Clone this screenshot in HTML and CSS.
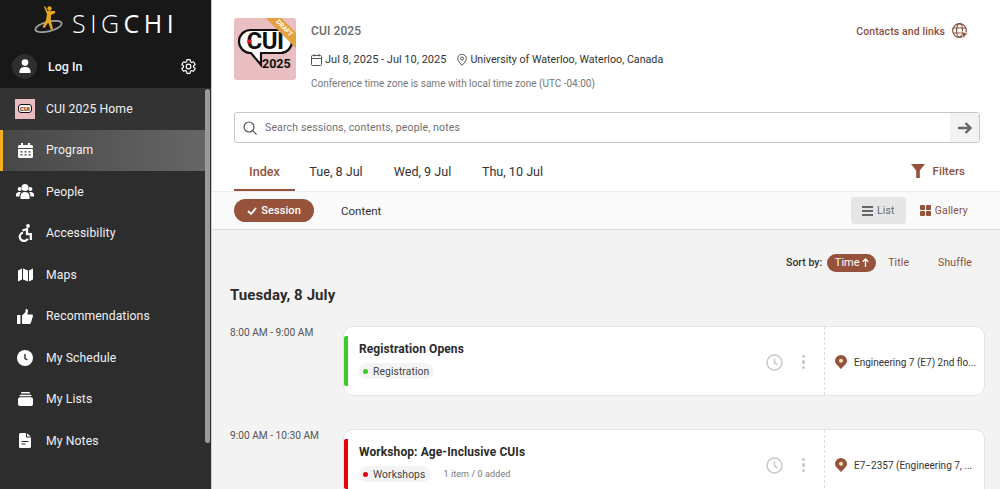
FILE: index.html
```html
<!DOCTYPE html>
<html lang="en">
<head>
<meta charset="utf-8">
<title>CUI 2025 Program</title>
<link rel="stylesheet" href="styles.css">
</head>
<body>
<div class="app">
  <aside class="sidebar">
    <div class="side-top">
      <div class="logo">
        <svg class="logo-mark" width="30" height="30" viewBox="0 0 30 30">
          <ellipse cx="14.500" cy="21.500" rx="13.500" ry="4.800" transform="rotate(-14 14.500 21.500)" fill="none" stroke="#a0a0a0" stroke-width="1.700"/>
          <circle cx="15.500" cy="3.500" r="2.200" fill="#e5a823"/>
          <path d="M11 1l2.500 5h3.500L21 6l.3 2-4.300 2-.2 5 2.200 9-2 1-2.800-7.500L10.500 23l-2-1 3.500-7 1-6-3-7z" fill="#e5a823"/>
        </svg>
        <span class="logo-text"><span class="thin">SIG</span><span class="bold">CHI</span></span>
      </div>
      <div class="login">
        <span class="avatar"><svg width="14" height="14" viewBox="0 0 14 14"><circle cx="7" cy="3.600" r="3.300" fill="#fff"/><path d="M1.500 14v-1.800C1.500 9.500 3.800 8 7 8s5.500 1.500 5.500 4.200V14z" fill="#fff"/></svg></span>
        <span class="login-text">Log In</span>
        <svg class="gear" width="17" height="17" viewBox="0 0 24 24" fill="none" stroke="#fff" stroke-width="1.700"><path d="M19.140 12.940c.04-.3.06-.61.06-.94 0-.32-.02-.64-.07-.94l2.030-1.580c.18-.14.23-.41.12-.61l-1.920-3.320c-.12-.22-.37-.29-.59-.22l-2.390.96c-.5-.38-1.030-.7-1.620-.94l-.36-2.540c-.04-.24-.24-.41-.48-.41h-3.840c-.24 0-.43.17-.47.41l-.36 2.540c-.59.24-1.130.57-1.620.94l-2.390-.96c-.22-.08-.47 0-.59.22L2.740 8.870c-.12.21-.08.47.12.61l2.030 1.580c-.05.3-.09.63-.09.94s.02.64.07.94l-2.030 1.580c-.18.14-.23.41-.12.61l1.920 3.320c.12.22.37.29.59.22l2.390-.96c.5.38 1.030.7 1.620.94l.36 2.540c.05.24.24.41.48.41h3.840c.24 0 .44-.17.47-.41l.36-2.540c.59-.24 1.130-.56 1.620-.94l2.390.96c.22.08.47 0 .59-.22l1.920-3.320c.12-.22.07-.47-.12-.61l-2.010-1.580z"/><circle cx="12" cy="12" r="3.300"/></svg>
      </div>
    </div>
    <div class="side-body">
      <nav class="nav">
        <a class="nav-item home">
          <span class="nav-icon"><span class="mini-logo"><span class="mini-bubble">CUI</span></span></span>
          <span>CUI 2025 Home</span>
        </a>
        <a class="nav-item active">
          <span class="nav-icon"><svg width="15" height="15" viewBox="0 0 15 15"><path d="M3 0h2v2h5V0h2v2h1.500A1.500 1.500 0 0 1 15 3.500V5H0V3.500A1.500 1.500 0 0 1 1.500 2H3zM0 6h15v7.500a1.500 1.500 0 0 1-1.500 1.500h-12A1.500 1.500 0 0 1 0 13.500z" fill="#fff"/><g fill="#666"><rect x="2.500" y="8" width="2" height="1.600"/><rect x="6.500" y="8" width="2" height="1.600"/><rect x="10.500" y="8" width="2" height="1.600"/><rect x="2.500" y="11" width="2" height="1.600"/><rect x="6.500" y="11" width="2" height="1.600"/><rect x="10.500" y="11" width="2" height="1.600"/></g></svg></span>
          <span>Program</span>
        </a>
        <a class="nav-item">
          <span class="nav-icon"><svg width="18" height="15" viewBox="0 0 18 15" fill="#fff"><circle cx="9" cy="3.500" r="3.500"/><circle cx="3.600" cy="5" r="2"/><circle cx="14.400" cy="5" r="2"/><path d="M4.500 15v-3C4.500 9.500 6.500 8 9 8s4.500 1.500 4.500 4v3z"/><path d="M0 12.500v-2C0 9 1.500 8 3.500 8c.7 0 1.200.1 1.500.3C4 9.300 3.500 10.500 3.500 12.500zM18 12.500v-2C18 9 16.500 8 14.500 8c-.7 0-1.200.1-1.500.3 1 1 1.500 2.200 1.500 4.200z"/></svg></span>
          <span>People</span>
        </a>
        <a class="nav-item">
          <span class="nav-icon"><svg width="14" height="18" viewBox="0 0 14 18"><circle cx="10" cy="1.900" r="1.900" fill="#fff"/><path d="M4.500 6.500l4.500-1.500v5.200h3.800V16" fill="none" stroke="#fff" stroke-width="2.300"/><path d="M5 8.500a4.300 4.300 0 1 0 4.800 6.300" fill="none" stroke="#fff" stroke-width="2.200"/></svg></span>
          <span>Accessibility</span>
        </a>
        <a class="nav-item">
          <span class="nav-icon"><svg width="15" height="14" viewBox="0 0 15 14" fill="#fff"><path d="M0 2.500L4 .5v11l-4 2zM5 .5l5 2v11l-5-2zM11 2.500l4-2v11l-4 2z"/></svg></span>
          <span>Maps</span>
        </a>
        <a class="nav-item">
          <span class="nav-icon"><svg width="16" height="15" viewBox="0 0 16 15" fill="#fff"><rect x="0" y="6" width="3.500" height="9" rx=".6"/><path d="M5 6.500L8.500 3V.8C8.500-.3 11-.3 11 2.200L10.300 5.500h4.200c1.300 0 1.800 1 1.300 2L14 13.500c-.3 1-1 1.500-2 1.500H6.500C5.500 15 5 14.500 5 13.500z"/></svg></span>
          <span>Recommendations</span>
        </a>
        <a class="nav-item">
          <span class="nav-icon"><svg width="16" height="16" viewBox="0 0 16 16"><circle cx="8" cy="8" r="8" fill="#fff"/><path d="M8 4v4.500l2.500 1.500" fill="none" stroke="#2d2d2d" stroke-width="1.400"/></svg></span>
          <span>My Schedule</span>
        </a>
        <a class="nav-item">
          <span class="nav-icon"><svg width="15" height="14" viewBox="0 0 15 14" fill="#fff"><rect x="3" y="0" width="9" height="1.500" rx=".7"/><rect x="1.500" y="2.700" width="12" height="1.500" rx=".7"/><rect x="0" y="5.300" width="15" height="8.700" rx="2"/></svg></span>
          <span>My Lists</span>
        </a>
        <a class="nav-item">
          <span class="nav-icon"><svg width="12" height="15" viewBox="0 0 12 15"><path d="M1.500 0H7v4.500h5v9A1.500 1.500 0 0 1 10.500 15h-9A1.500 1.500 0 0 1 0 13.500v-12A1.500 1.500 0 0 1 1.500 0zM8 .3L11.700 3.500H8z" fill="#fff"/><path d="M2.500 8.500h7M2.500 11h4" stroke="#2d2d2d" stroke-width="1.200"/></svg></span>
          <span>My Notes</span>
        </a>
      </nav>
      <div class="scroll-track"><div class="scroll-thumb"></div></div>
    </div>
  </aside>

  <main class="main">
    <header class="conf">
      <div class="conf-logo">
        <svg class="bubble-art" width="62" height="62" viewBox="0 0 62 62"><path d="M16.500 12h30a11.500 11.500 0 0 1 0 23H27v12L17 35h-.5a11.500 11.500 0 0 1 0-23z" fill="#fff" stroke="#111" stroke-width="2.200"/></svg>
        <span class="draft">DRAFT</span>
        <span class="bubble">CUI</span>
        <svg class="bubble-dot" width="5" height="5" viewBox="0 0 5 5"><circle cx="2.500" cy="2.500" r="2.200" fill="#d8141f"/></svg>
        <span class="conf-year">2025</span>
      </div>
      <div class="conf-info">
        <div class="conf-name">CUI 2025</div>
        <div class="conf-meta">
          <span class="meta-item"><svg width="11" height="12" viewBox="0 0 11 12" fill="none" stroke="#555" stroke-width="1"><rect x=".5" y="1.500" width="10" height="10" rx="1"/><path d="M.5 4.500h10M3 0v2.500M8 0v2.500"/></svg>Jul 8, 2025 - Jul 10, 2025</span>
          <span class="meta-item place"><svg width="10" height="12" viewBox="0 0 10 12" fill="none" stroke="#555" stroke-width="1"><path d="M5 11.300C2.500 8.500.7 6.700.7 4.500a4.300 4.300 0 0 1 8.600 0C9.300 6.700 7.500 8.500 5 11.300z"/><circle cx="5" cy="4.500" r="1.500"/></svg>University of Waterloo, Waterloo, Canada</span>
        </div>
        <div class="conf-tz">Conference time zone is same with local time zone (UTC -04:00)</div>
      </div>
      <a class="contacts">Contacts and links
        <svg width="17" height="17" viewBox="0 0 17 17" fill="none" stroke="#8a4f3c" stroke-width="1.200"><circle cx="7.500" cy="7.500" r="6.800"/><ellipse cx="7.500" cy="7.500" rx="3" ry="6.800"/><path d="M1 5h13M1 10h8"/><path d="M8.500 8l8 3-3.200 1.400-1.400 3.600z" fill="#8a4f3c" stroke="#fff" stroke-width=".8"/></svg>
      </a>
    </header>

    <div class="search-wrap">
      <div class="search">
        <svg width="14" height="14" viewBox="0 0 14 14" fill="none" stroke="#555" stroke-width="1.200"><circle cx="6" cy="6" r="5"/><path d="M9.700 9.700L13.500 13.500"/></svg>
        <span class="search-ph">Search sessions, contents, people, notes</span>
        <span class="search-go"><svg width="14" height="12" viewBox="0 0 14 12" fill="none" stroke="#666" stroke-width="2.400"><path d="M0 6h12.500M7.500 1l5 5-5 5"/></svg></span>
      </div>
    </div>

    <div class="tabs">
      <a class="tab current">Index</a>
      <a class="tab">Tue, 8 Jul</a>
      <a class="tab">Wed, 9 Jul</a>
      <a class="tab">Thu, 10 Jul</a>
      <a class="filters">
        <svg width="14" height="14" viewBox="0 0 14 14" fill="#96523a"><path d="M0 0h14L8.800 6.500V14H5.200V6.500z"/></svg>
        Filters
      </a>
    </div>

    <div class="toolbar">
      <span class="chip-on"><svg width="10" height="8" viewBox="0 0 10 8" fill="none" stroke="#fff" stroke-width="1.800"><path d="M1 4l3 3 5-6"/></svg>Session</span>
      <span class="chip-off">Content</span>
      <span class="views">
        <span class="view on"><svg width="11" height="10" viewBox="0 0 11 10" fill="#666"><rect width="11" height="2"/><rect y="4" width="11" height="2"/><rect y="8" width="11" height="2"/></svg>List</span>
        <span class="view gallery"><svg width="11" height="11" viewBox="0 0 11 11" fill="#96523a"><rect width="5" height="5" rx=".8"/><rect x="6" width="5" height="5" rx=".8"/><rect y="6" width="5" height="5" rx=".8"/><rect x="6" y="6" width="5" height="5" rx=".8"/></svg>Gallery</span>
      </span>
    </div>

    <section class="content">
      <div class="sort">
        <span class="sort-label">Sort by:</span>
        <span class="sort-on">Time<svg width="7" height="9" viewBox="0 0 7 9" fill="none" stroke="#fff" stroke-width="1.300"><path d="M3.500 9V1M.7 3.800l2.800-2.800 2.800 2.800"/></svg></span>
        <span class="sort-opt title">Title</span>
        <span class="sort-opt">Shuffle</span>
      </div>
      <h2 class="day">Tuesday, 8 July</h2>

      <div class="slot">
        <div class="time">8:00 AM - 9:00 AM</div>
        <article class="card">
          <span class="stripe green"></span>
          <div class="card-main">
            <h3>Registration Opens</h3>
            <div class="tags"><span class="tag"><i class="dot green"></i>Registration</span></div>
          </div>
          <div class="card-acts">
            <svg width="17" height="17" viewBox="0 0 17 17" fill="none" stroke="#c8c8cc" stroke-width="1.500"><circle cx="8.500" cy="8.500" r="7.500"/><path d="M8.500 4.500v4.500l3 1.800"/></svg>
            <span class="dots"><i></i><i></i><i></i></span>
          </div>
          <div class="card-loc">
            <svg width="12" height="14" viewBox="0 0 12 14"><path d="M6 14C2.500 10.500 0 8.500 0 5.800a6 5.800 0 0 1 12 0C12 8.500 9.500 10.500 6 14z" fill="#96523a"/><circle cx="6" cy="5.800" r="2" fill="#fbe3b5"/></svg>
            <span>Engineering 7 (E7) 2nd flo...</span>
          </div>
        </article>
      </div>

      <div class="slot">
        <div class="time">9:00 AM - 10:30 AM</div>
        <article class="card">
          <span class="stripe red"></span>
          <div class="card-main">
            <h3>Workshop: Age-Inclusive CUIs</h3>
            <div class="tags"><span class="tag"><i class="dot red"></i>Workshops</span><span class="count">1 item / 0 added</span></div>
          </div>
          <div class="card-acts">
            <svg width="17" height="17" viewBox="0 0 17 17" fill="none" stroke="#c8c8cc" stroke-width="1.500"><circle cx="8.500" cy="8.500" r="7.500"/><path d="M8.500 4.500v4.500l3 1.800"/></svg>
            <span class="dots"><i></i><i></i><i></i></span>
          </div>
          <div class="card-loc">
            <svg width="12" height="14" viewBox="0 0 12 14"><path d="M6 14C2.500 10.500 0 8.500 0 5.800a6 5.800 0 0 1 12 0C12 8.500 9.500 10.500 6 14z" fill="#96523a"/><circle cx="6" cy="5.800" r="2" fill="#fbe3b5"/></svg>
            <span>E7−2357 (Engineering 7, ...</span>
          </div>
        </article>
      </div>
    </section>
  </main>
</div>
</body>
</html>
```
FILE: styles.css
```css
* { box-sizing: border-box; }
html, body { margin: 0; height: 100%; overflow: hidden; }
body { font-family: Roboto, "Liberation Sans", sans-serif; color: #2b2b2b; background: #fff; }
a { color: inherit; text-decoration: none; }
.app { display: flex; height: 489px; overflow: hidden; }

.sidebar { width: 212px; flex: none; display: flex; flex-direction: column; background: #2d2d2d; border-right: 1px solid #ccc; }
.side-top { height: 88px; flex: none; background: #181818; }
.logo { height: 44px; display: flex; align-items: flex-start; padding: 5px 0 0 34px; }
.logo-mark { flex: none; }
.logo-text { font-family: "Open Sans", Roboto, sans-serif; font-size: 25px; line-height: 34px; letter-spacing: 4.500px; color: #fff; margin-left: 8px; padding-top: 1px; }
.logo-text .thin { font-weight: 300; }
.logo-text .bold { font-weight: 500; }
.login { display: flex; align-items: center; height: 24px; margin-top: 10px; padding-left: 12px; }
.avatar { width: 25px; height: 25px; border-radius: 50%; background: #2e2e2e; display: flex; align-items: center; justify-content: center; }
.login-text { font-size: 12.500px; font-weight: 500; color: #f2f2f2; margin-left: 11px; flex: 1; }
.gear { margin-right: 14px; }

.side-body { flex: 1; display: flex; min-height: 0; }
.nav { flex: 1; display: flex; flex-direction: column; }
.nav-item { height: 41.500px; display: flex; align-items: center; font-size: 12.200px; letter-spacing: .1px; color: #f0f0f0; flex: none; }
.nav-icon { width: 46px; flex: none; display: flex; align-items: center; justify-content: center; padding-left: 4px; }
.nav-item.home { background: #333; }
.nav-item.active { background: linear-gradient(90deg, #474747, #666); box-shadow: inset 3px 0 0 #f2b01e; }
.mini-logo { width: 20px; height: 20px; background: #e9bcc0; display: flex; align-items: center; justify-content: center; }
.mini-bubble { font-size: 6px; line-height: 7px; font-weight: 700; color: #111; background: #fff; border: 1px solid #111; border-radius: 3px; padding: 0 1px; }
.scroll-track { width: 6px; flex: none; background: #2d2d2d; }
.scroll-thumb { width: 5px; height: 354px; margin-top: 1px; background: #9a9a9a; border-radius: 3px; }

.main { flex: 1; min-width: 0; display: flex; flex-direction: column; background: #f3f3f3; }
.conf { height: 112px; flex: none; background: #fff; display: flex; padding: 17px 0 0 22px; position: relative; }
.conf-logo { width: 62px; height: 62px; margin-top: 1px; background: #e8bec1; border-radius: 3px; flex: none; position: relative; overflow: hidden; }
.bubble-art { position: absolute; left: 0; top: 0; }
.bubble-dot { position: absolute; left: 13px; top: 21px; }
.draft { position: absolute; top: 5px; right: -20px; width: 64px; height: 11px; background: #e4a03c; color: #fff; font-size: 6.500px; line-height: 11px; font-weight: 700; text-align: center; transform: rotate(45deg); z-index: 2; }
.bubble { position: absolute; left: 8px; top: 10px; width: 46px; font-size: 24px; line-height: 27px; font-weight: 700; color: #111; text-align: center; letter-spacing: -.5px; }
.conf-year { position: absolute; left: 28px; top: 38px; font-size: 12.500px; line-height: 15px; font-weight: 700; color: #111; }
.conf-info { margin-left: 15px; flex: 1; }
.conf-name { font-size: 12px; font-weight: 500; color: #6a6a6a; line-height: 14px; margin-top: 7px; letter-spacing: .1px; }
.conf-meta { display: flex; gap: 11px; margin-top: 15px; font-size: 11px; line-height: 14px; color: #333; }
.meta-item { display: flex; align-items: center; gap: 3px; }
.meta-item.place { font-size: 10.700px; }
.conf-tz { margin-top: 10px; font-size: 10px; line-height: 13px; color: #777; }
.contacts { position: absolute; right: 31px; top: 23px; display: flex; align-items: center; gap: 7px; font-size: 10.500px; font-weight: 500; color: #8a4f3c; letter-spacing: .1px; }

.search-wrap { flex: none; background: #fff; padding: 0 20px 0 22px; height: 31px; }
.search { height: 31px; border: 1px solid #c6c6c6; border-radius: 3px; display: flex; align-items: center; padding-left: 8px; background: #fff; }
.search-ph { margin-left: 8px; flex: 1; font-size: 10.500px; color: #6f6f6f; letter-spacing: .15px; }
.search-go { width: 29px; height: 29px; background: #f2f2f2; display: flex; align-items: center; justify-content: center; }

.tabs { height: 48px; flex: none; background: #fff; display: flex; align-items: stretch; padding: 0 35px 0 22px; }
.tab { width: 61px; display: flex; align-items: center; justify-content: center; font-size: 12.600px; color: #333; padding-top: 9px; white-space: nowrap; }
.tab:nth-child(2) { margin-left: 12px; width: 58px; }
.tab:nth-child(3) { margin-left: 27px; width: 61px; }
.tab:nth-child(4) { margin-left: 27px; width: 65px; }
.tab.current { color: #96523a; font-weight: 500; border-bottom: 2px solid #96523a; padding-top: 11px; }
.filters { margin-left: auto; display: flex; align-items: center; gap: 8px; font-size: 11.600px; font-weight: 500; color: #8a4f3c; padding-top: 7px; }

.toolbar { height: 39px; flex: none; background: #fafafa; border-top: 1px solid #eee; border-bottom: 1px solid #ddd; display: flex; align-items: center; padding: 0 20px 0 22px; }
.chip-on { width: 80px; height: 23px; border-radius: 12px; background: #96523a; color: #fff; font-size: 11px; font-weight: 500; display: flex; align-items: center; justify-content: center; gap: 4px; letter-spacing: .1px; }
.chip-off { font-size: 11.500px; color: #333; margin-left: 27px; }
.views { margin-left: auto; display: flex; align-items: center; font-size: 10.400px; }
.view { display: flex; align-items: center; gap: 4px; letter-spacing: .2px; }
.view.on { width: 55px; height: 27px; justify-content: center; background: #e6e6e6; border-radius: 3px; color: #666; }
.view.gallery { color: #8a4f3c; margin-left: 14px; margin-right: 12px; }

.content { flex: 1; padding: 0 15px 0 18px; min-height: 0; }
.sort { display: flex; align-items: center; height: 19px; margin-top: 23px; font-size: 10.500px; }
.sort-label { margin-left: auto; color: #333; font-weight: 500; }
.sort-on { width: 49px; height: 18px; border-radius: 9px; background: #96523a; color: #fff; margin-left: 5px; display: flex; align-items: center; justify-content: center; gap: 2px; font-size: 11px; }
.sort-opt { color: #8a4f3c; font-size: 10.500px; letter-spacing: .1px; margin-right: 13px; margin-left: 30px; }
.sort-opt.title { margin-left: 12px; margin-right: -1px; }
.day { margin: 13px 0 0; font-size: 15px; line-height: 20px; font-weight: 700; color: #2b2b2b; letter-spacing: .1px; }
.slot { display: flex; margin-top: 21px; height: 69px; }
.slot + .slot { margin-top: 34px; }
.time { width: 113px; flex: none; font-size: 10.200px; line-height: 11px; color: #555; padding-top: 1px; }
.card { flex: 1; height: 70px; display: flex; align-items: stretch; background: #fff; border: 1px solid #e4e4e6; border-radius: 10px; position: relative; min-width: 0; }
.stripe { position: absolute; left: 0; top: 9px; width: 4px; height: 50px; border-radius: 2px 0 0 2px; }
.stripe.green { background: #3ccb2c; }
.stripe.red { background: #e3000f; }
.card-main { flex: 1; padding: 15px 0 0 15px; min-width: 0; }
.card-main h3 { margin: 0; font-size: 12px; line-height: 15px; font-weight: 700; color: #2b2b2b; letter-spacing: .1px; }
.tags { display: flex; align-items: center; margin-top: 6px; }
.tag { display: inline-flex; align-items: center; height: 16px; padding: 0 5px 0 4px; background: #f4f4f4; border-radius: 8px; font-size: 10.300px; color: #444; letter-spacing: .1px; }
.dot { width: 5px; height: 5px; border-radius: 50%; margin-right: 5px; }
.dot.green { background: #3ccb2c; }
.dot.red { background: #e3000f; }
.count { margin-left: 13px; font-size: 9px; color: #777; letter-spacing: .1px; }
.card-acts { flex: none; display: flex; align-items: center; padding: 2px 19px 0 0; gap: 19px; }
.dots { display: flex; flex-direction: column; gap: 2px; }
.dots i { width: 3.500px; height: 3.500px; background: #c8c8cc; border-radius: 50%; display: block; }
.card-loc { width: 160px; flex: none; border-left: 1px dashed #ddd; display: flex; align-items: center; gap: 7px; padding: 2px 0 0 10px; font-size: 10px; color: #333; white-space: nowrap; overflow: hidden; }
```
